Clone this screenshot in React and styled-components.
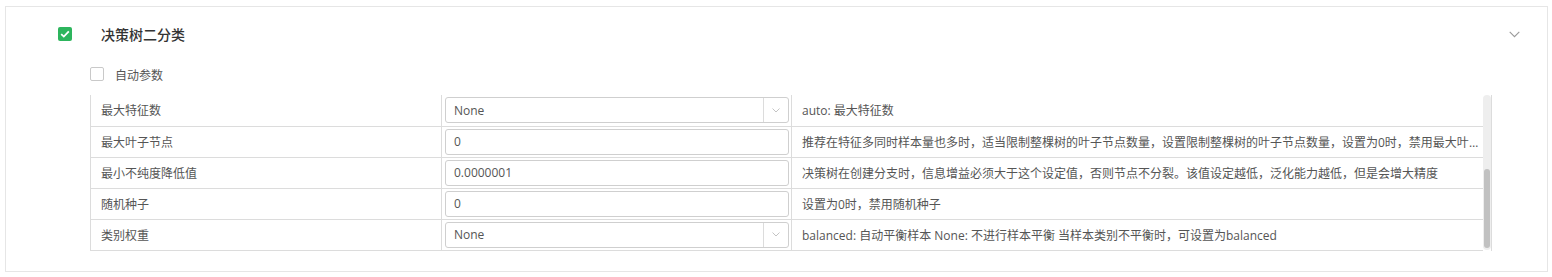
import React from "react";
import styled, { createGlobalStyle } from "styled-components";

const GlobalStyle = createGlobalStyle`
  html, body {
    margin: 0;
    padding: 0;
    background: #fff;
  }
  body {
    font-family: "Open Sans", "Noto Sans CJK SC", sans-serif;
    color: #555;
  }
`;

const Page = styled.div`
  padding: 6px 4px 6px 5px;
`;

const Card = styled.div`
  border: 1px solid #e6e6e6;
  background: #fff;
  padding-bottom: 20px;
`;

const Header = styled.div`
  display: flex;
  align-items: center;
  height: 28px;
  margin-top: 13px;
  padding: 0 27px 0 52px;
`;

const GreenCheck = styled.span`
  width: 14px;
  height: 14px;
  border-radius: 2px;
  background: #2db55d;
  display: flex;
  align-items: center;
  justify-content: center;
  flex-shrink: 0;
`;

const Title = styled.span`
  margin-left: 29px;
  font-family: "Noto Sans CJK SC", sans-serif;
  font-size: 14px;
  font-weight: 500;
  color: #333;
  flex: 1;
`;

const Chevron = styled.svg`
  width: 11px;
  height: 7px;
  display: block;
`;

const Body = styled.div`
  padding: 0 55px 0 84px;
`;

const AutoRow = styled.label`
  display: flex;
  align-items: center;
  height: 20px;
  margin-top: 16px;
  margin-bottom: 11px;
`;

const EmptyCheck = styled.span`
  width: 12px;
  height: 12px;
  border: 1px solid #c9c9c9;
  border-radius: 2px;
  background: #fff;
`;

const AutoText = styled.span`
  margin-left: 11px;
  font-family: "Noto Sans CJK SC", sans-serif;
  font-size: 12px;
  color: #555;
`;

const Frame = styled.div`
  display: flex;
  border-right: 1px solid #dcdcdc;
`;

const TableWrap = styled.div`
  flex: 1;
  min-width: 0;
`;

const Table = styled.table`
  width: 100%;
  table-layout: fixed;
  border-collapse: collapse;
`;

const ScrollTrack = styled.div`
  width: 8px;
  height: 155px;
  flex-shrink: 0;
  background: #eeeeee;
  border-radius: 4px;
  display: flex;
  flex-direction: column;
  justify-content: flex-end;
  align-items: center;
  padding-bottom: 2px;
  box-sizing: border-box;
`;

const ScrollThumb = styled.div`
  width: 6px;
  height: 79px;
  border-radius: 3px;
  background: #c1c1c1;
`;

const Row = styled.tr`
  height: 31px;
`;

const paddings = {
  label: "0 10px",
  field: "2px 2px 2px 3px",
  desc: "0 1px 0 10px",
};

const Cell = styled.td`
  box-sizing: border-box;
  height: 31px;
  padding: ${(p) => paddings[p.$kind]};
  border-left: 1px solid #dcdcdc;
  border-bottom: 1px solid #dcdcdc;
  font-family: "Open Sans", "Noto Sans CJK SC", sans-serif;
  font-size: 12px;
  color: #555;
  white-space: nowrap;
  overflow: hidden;
  text-overflow: ellipsis;
  vertical-align: middle;
`;

const Input = styled.div`
  box-sizing: border-box;
  height: 26px;
  border: 1px solid #cfcfcf;
  border-radius: 3px;
  display: flex;
  align-items: center;
  padding-left: 8px;
  font-size: 12px;
  color: #555;
  background: #fff;
`;

const SelectBox = styled(Input)`
  padding-left: 0;
`;

const SelectValue = styled.span`
  flex: 1;
  padding-left: 8px;
`;

const SelectArrow = styled.span`
  width: 24px;
  height: 100%;
  border-left: 1px solid #dcdcdc;
  display: flex;
  align-items: center;
  justify-content: center;
`;

const rows = [
  { label: "最大特征数", type: "select", value: "None", desc: "auto: 最大特征数" },
  {
    label: "最大叶子节点",
    type: "input",
    value: "0",
    desc: "推荐在特征多同时样本量也多时，适当限制整棵树的叶子节点数量，设置限制整棵树的叶子节点数量，设置为0时，禁用最大叶子节点数限制",
  },
  {
    label: "最小不纯度降低值",
    type: "input",
    value: "0.0000001",
    desc: "决策树在创建分支时，信息增益必须大于这个设定值，否则节点不分裂。该值设定越低，泛化能力越低，但是会增大精度",
  },
  { label: "随机种子", type: "input", value: "0", desc: "设置为0时，禁用随机种子" },
  {
    label: "类别权重",
    type: "select",
    value: "None",
    desc: "balanced: 自动平衡样本 None: 不进行样本平衡 当样本类别不平衡时，可设置为balanced",
  },
];

function SmallArrow() {
  return (
    <svg width="8" height="5" viewBox="0 0 8 5">
      <path d="M0.5 0.5 L4 4 L7.5 0.5" fill="none" stroke="#c4c4c4" strokeWidth="1" />
    </svg>
  );
}

function Field({ row }) {
  if (row.type === "select") {
    return (
      <SelectBox>
        <SelectValue>{row.value}</SelectValue>
        <SelectArrow>
          <SmallArrow />
        </SelectArrow>
      </SelectBox>
    );
  }
  return <Input>{row.value}</Input>;
}

export default function App() {
  return (
    <Page>
      <GlobalStyle />
      <Card>
        <Header>
          <GreenCheck>
            <svg width="10" height="8" viewBox="0 0 10 8">
              <path d="M1.2 4.2 L3.8 6.6 L8.8 1.4" fill="none" stroke="#fff" strokeWidth="1.8" />
            </svg>
          </GreenCheck>
          <Title>决策树二分类</Title>
          <Chevron viewBox="0 0 11 7">
            <path d="M0.7 0.8 L5.5 5.6 L10.3 0.8" fill="none" stroke="#9a9a9a" strokeWidth="1.1" />
          </Chevron>
        </Header>
        <Body>
          <AutoRow>
            <EmptyCheck />
            <AutoText>自动参数</AutoText>
          </AutoRow>
          <Frame>
            <TableWrap>
              <Table>
                <colgroup>
                  <col style={{ width: 351 }} />
                  <col style={{ width: 350 }} />
                  <col />
                </colgroup>
                <tbody>
                  {rows.map((row) => (
                    <Row key={row.label}>
                      <Cell $kind="label">{row.label}</Cell>
                      <Cell $kind="field">
                        <Field row={row} />
                      </Cell>
                      <Cell $kind="desc">{row.desc}</Cell>
                    </Row>
                  ))}
                </tbody>
              </Table>
            </TableWrap>
            <ScrollTrack>
              <ScrollThumb />
            </ScrollTrack>
          </Frame>
        </Body>
      </Card>
    </Page>
  );
}
